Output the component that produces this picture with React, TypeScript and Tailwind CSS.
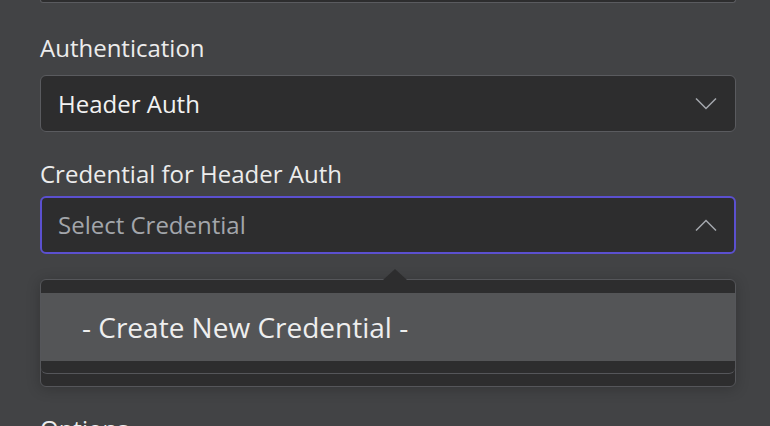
const font = { fontFamily: '"Open Sans", "Noto Sans", sans-serif' }

function Chevron({ up }: { up?: boolean }) {
  return (
    <svg width="22" height="12" viewBox="0 0 22 12" fill="none" className="shrink-0">
      <path
        d={up ? 'M1 11.5 L11 1.5 L21 11.5' : 'M1 0.5 L11 10.5 L21 0.5'}
        stroke="#a4a7ad"
        strokeWidth="1.5"
      />
    </svg>
  )
}

export default function App() {
  return (
    <div className="w-[770px] h-[426px] overflow-hidden bg-[#424345] pl-[40px]" style={font}>
      <div className="w-[696px]">
        <div className="h-[3px] rounded-b-[6px] border-x border-b border-[#5a5b5f] bg-[#2d2d2e]" />

        <label className="mt-[29px] block text-[24px] leading-[32px] text-[#ececec]">Authentication</label>
        <div className="mt-[11px] flex h-[57px] items-center justify-between rounded-[6px] border border-[#5a5b5f] bg-[#2d2d2e] pl-[17px] pr-[18px]">
          <span className="text-[24px] leading-[30px] text-[#f2f2f2]">Header Auth</span>
          <Chevron />
        </div>

        <label className="mt-[26px] block text-[24px] leading-[32px] text-[#ececec]">Credential for Header Auth</label>
        <div className="mt-[6px] flex h-[58px] items-center justify-between rounded-[6px] border-2 border-[#5b50cf] bg-[#2d2d2e] pl-[16px] pr-[17px]">
          <span className="text-[24px] leading-[30px] text-[#a3a6ab]">Select Credential</span>
          <Chevron up />
        </div>

        <div className="relative mt-[25px] h-[108px] rounded-[6px] border border-[#55565a] bg-[#2d2d2e] shadow-[0_2px_14px_rgba(0,0,0,0.22)]">
          <div className="absolute left-[342px] top-[-11px] h-0 w-0 border-x-[12px] border-b-[11px] border-x-transparent border-b-[#2d2d2e]" />
          <div className="h-[94px] rounded-b-[6px] border-b border-[#55565a] pt-[13px]">
            <div className="flex h-[68px] items-center bg-[#545557] pl-[41px] text-[28px] leading-[38px] text-[#eeeeee]">
              - Create New Credential -
            </div>
          </div>
        </div>

        <label className="mt-[26px] block text-[24px] leading-[32px] text-[#ececec]">Options</label>
      </div>
    </div>
  )
}
